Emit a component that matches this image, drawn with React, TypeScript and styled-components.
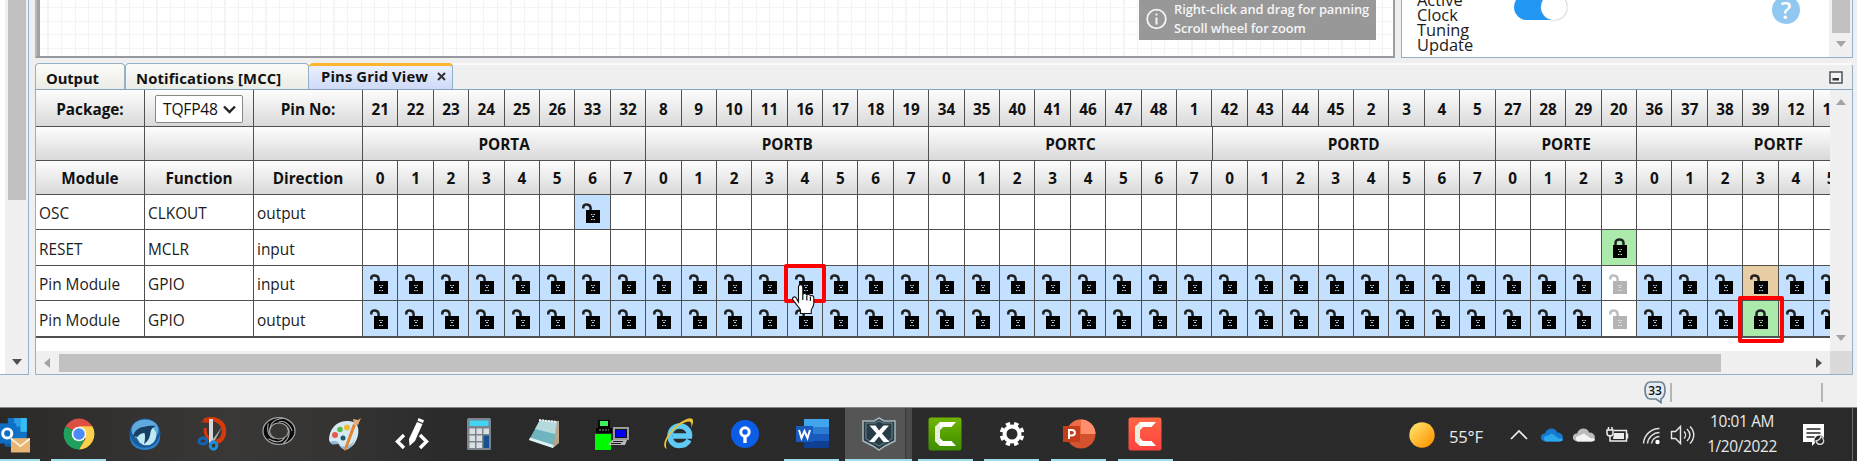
import React from "react";
import styled, { createGlobalStyle, css } from "styled-components";

const Global = createGlobalStyle`
  * { box-sizing: border-box; }
  html, body { margin: 0; padding: 0; overflow: hidden; background: #efefef; }
  body { font-family: "Open Sans", "Noto Sans", sans-serif; color: #1c1c1c; }
  svg { display: block; flex: none; }
`;

const LINE = "#505050";
const EDGE = "#94b0c8";

const Page = styled.div`
  width: 1857px;
  height: 461px;
  display: flex;
  flex-direction: column;
  overflow: hidden;
`;

const Workspace = styled.div`
  display: flex;
  height: 375px;
  flex: none;
`;

const SidePanel = styled.div`
  width: 29px;
  margin-right: 6px;
  border-right: 1px solid ${EDGE};
  border-bottom: 1px solid ${EDGE};
  background: #fff;
  display: flex;
  justify-content: flex-end;
`;

const VTrack = styled.div<{ $w: number }>`
  width: ${(p) => p.$w}px;
  flex: none;
  background: #f0f0f0;
  display: flex;
  flex-direction: column;
  align-items: center;
  justify-content: space-between;
`;

const VThumb = styled.div<{ $h: number }>`
  width: 18px;
  height: ${(p) => p.$h}px;
  background: #c1c1c1;
`;

const Arrow = styled.div<{ $dir: "up" | "down" | "left" | "right"; $dark?: boolean; $gap: string }>`
  width: 0;
  height: 0;
  margin: ${(p) => p.$gap};
  border: 5px solid transparent;
  ${(p) => {
    const c = p.$dark ? "#505050" : "#a3a3a3";
    switch (p.$dir) {
      case "up":
        return css`border-bottom: 6px solid ${c}; border-top: 0;`;
      case "down":
        return css`border-top: 6px solid ${c}; border-bottom: 0;`;
      case "left":
        return css`border-right: 6px solid ${c}; border-left: 0;`;
      default:
        return css`border-left: 6px solid ${c}; border-right: 0;`;
    }
  }}
`;

const MainColumn = styled.div`
  width: 1818px;
  display: flex;
  flex-direction: column;
`;

const TopRow = styled.div`
  display: flex;
  height: 58px;
  gap: 6px;
`;

const Canvas = styled.div`
  width: 1360px;
  border-left: 2px solid #b4bac0;
  border-right: 2px solid #9a9da1;
  border-bottom: 2px solid #96999e;
  box-shadow: inset 3px 0 0 #a2a2a2;
  background:
    repeating-linear-gradient(90deg, transparent 0 10.4px, #f4f4f4 10.4px 11.6px, transparent 11.6px 13.62px),
    repeating-linear-gradient(180deg, transparent 0 7px, #f4f4f4 7px 8.2px, transparent 8.2px 13.62px),
    #fff;
  display: flex;
  justify-content: flex-end;
  align-items: flex-start;
  padding-right: 17px;
`;

const Hint = styled.div`
  width: 237px;
  height: 40px;
  background: #989898;
  color: #f5f5f5;
  display: flex;
  align-items: center;
  padding: 0 0 2px 7px;
  gap: 7px;
  font-size: 12.9px;
  font-weight: 600;
  line-height: 19px;
  letter-spacing: -0.09px;
  white-space: nowrap;
`;

const OptionPanel = styled.div`
  width: 452px;
  border: 1px solid ${EDGE};
  border-top: 0;
  background: #fff;
  display: flex;
  overflow: hidden;
`;

const OptionLabel = styled.div`
  width: 96px;
  padding-left: 15px;
  margin-top: -8px;
  font-size: 16.4px;
  line-height: 15px;
`;

const OptionBody = styled.div`
  flex: 1;
  display: flex;
  justify-content: space-between;
  padding: 0 29px 0 16px;
`;

const Toggle = styled.div`
  width: 53px;
  height: 26px;
  margin-top: -6px;
  border-radius: 13px;
  background: #2196f3;
  display: flex;
  justify-content: flex-end;
`;

const Knob = styled.div`
  width: 26px;
  height: 26px;
  border-radius: 50%;
  background: #fff;
  box-shadow: 0 0 2px #aaa;
`;

const Help = styled.div`
  width: 28px;
  height: 28px;
  margin-top: -4px;
  border-radius: 50%;
  background: #90c8f2;
  color: #fff;
  font-size: 23px;
  font-weight: 600;
  line-height: 28px;
  text-align: center;
`;

const Dock = styled.div`
  height: 312px;
  margin-top: 5px;
  border: 1px solid ${EDGE};
  border-radius: 4px 4px 0 0;
  display: flex;
  flex-direction: column;
`;

const TabStrip = styled.div`
  height: 27px;
  margin-top: -1px;
  margin-left: -1px;
  flex: none;
  border-bottom: 1px solid #86a3bf;
  display: flex;
  box-shadow: inset 0 3px 0 -1px #fafafa;
`;

const Tab = styled.div<{ $w: number; $active?: boolean; $spacing: number }>`
  width: ${(p) => p.$w}px;
  padding: ${(p) => (p.$active ? "0 6px 3px 12px" : "2px 7px 0 10px")};
  display: flex;
  align-items: center;
  justify-content: space-between;
  border: 1px solid ${EDGE};
  border-bottom: 0;
  border-left-width: ${(p) => (p.$active ? 0 : 1)}px;
  border-top: ${(p) => (p.$active ? "3px solid #fdb52d" : `1px solid ${EDGE}`)};
  border-radius: 4px 4px 0 0;
  background: ${(p) =>
    p.$active ? "linear-gradient(#e9effd, #cfdaf7)" : "linear-gradient(#fbfbf8, #ecece6)"};
  color: #111;
  font-size: 14.8px;
  font-weight: 700;
  line-height: 18px;
  letter-spacing: ${(p) => p.$spacing}px;
  white-space: nowrap;
`;

const StripEnd = styled.div`
  flex: 1;
  display: flex;
  justify-content: flex-end;
  padding: 8px 9px 0 0;
`;

const DockBody = styled.div`
  height: 284px;
  display: flex;
`;

const Viewport = styled.div`
  width: 1794px;
  display: flex;
  flex-direction: column;
  justify-content: space-between;
  background: #fff;
`;

const Grid = styled.div`
  overflow: hidden;
  padding-bottom: 8px;
`;

const Row = styled.div<{ $h: number; $last?: boolean }>`
  display: flex;
  width: 2100px;
  height: ${(p) => p.$h}px;
  border-bottom: ${(p) => (p.$last ? 2 : 1)}px solid ${LINE};
`;

const HeadCell = styled.div<{ $w: number }>`
  width: ${(p) => p.$w}px;
  flex: none;
  border-right: 1px solid ${LINE};
  background: linear-gradient(#fdfdfd, #d9d9d9);
  display: flex;
  align-items: center;
  justify-content: center;
  font-size: 15.3px;
  font-weight: 700;
  color: #111;
  padding-top: 1px;
`;

const LabelCell = styled.div`
  width: 109px;
  flex: none;
  border-right: 1px solid ${LINE};
  padding: 3px 0 0 3px;
  display: flex;
  align-items: center;
  font-size: 15.4px;
`;

const fills = { none: "#fff", free: "#c3e0fe", used: "#abeaab", shared: "#e6cda3" };

const PinCell = styled.div<{ $fill: keyof typeof fills }>`
  width: 35.4px;
  flex: none;
  position: relative;
  border-right: 1px solid ${LINE};
  background: ${(p) => fills[p.$fill]};
  padding: 8px 0 0 7px;
`;

const Mark = styled.div<{ $w: number; $h: number; $x: number; $y: number }>`
  position: absolute;
  z-index: 2;
  left: ${(p) => p.$x}px;
  top: ${(p) => p.$y}px;
  width: ${(p) => p.$w}px;
  height: ${(p) => p.$h}px;
  border: 4px solid #f00;
  border-radius: 2px;
`;

const Pointer = styled.svg`
  position: absolute;
  z-index: 3;
  left: 3px;
  top: 17px;
`;

const Select = styled.div`
  width: 88px;
  height: 28px;
  border: 1px solid #888;
  border-radius: 2px;
  background: #fff;
  display: flex;
  align-items: center;
  justify-content: space-between;
  padding: 1px 6px 0 7px;
  font-size: 15.6px;
  font-weight: 400;
  letter-spacing: -0.2px;
`;

const HTrack = styled.div`
  height: 23px;
  flex: none;
  background: #f0f0f0;
  display: flex;
  align-items: center;
  justify-content: space-between;
`;

const HThumb = styled.div`
  width: 1662px;
  height: 18px;
  margin-right: auto;
  background: #c1c1c1;
`;

const Corner = styled.div`
  width: 22px;
  height: 23px;
  background: #dadada;
`;

const ScrollColumn = styled.div`
  display: flex;
  flex-direction: column;
  & > :first-child { flex: 1; }
`;

const StatusBar = styled.div`
  height: 32px;
  flex: none;
  display: flex;
  align-items: flex-start;
  padding: 6px 0 0 1643px;
`;

const Divider = styled.div<{ $gap: number }>`
  width: 2px;
  height: 19px;
  margin: 2px 0 0 ${(p) => p.$gap}px;
  background: #b5b5b5;
`;

const Taskbar = styled.div`
  height: 54px;
  flex: none;
  border-top: 1px solid #858585;
  background: linear-gradient(90deg, #2b2a29 0, #393836 230px, #353433 340px, #2a2a2a 450px, #2b2b2b 1200px, #2a2a2b 100%);
  color: #e9e9e9;
  display: flex;
`;

const Apps = styled.div`
  display: flex;
  flex: none;
  margin-left: -21.3px;
  width: 1430.3px;
`;

const AppSlot = styled.div<{ $open?: boolean; $active?: boolean }>`
  width: 66.67px;
  flex: none;
  display: flex;
  flex-direction: column;
  align-items: center;
  justify-content: space-between;
  padding-top: 9px;
  background: ${(p) =>
    p.$active ? "linear-gradient(90deg, #555 0 60px, #393939 60px 61px, #4b4b4b 61px)" : "none"};
  &::after {
    content: "";
    width: ${(p) => (p.$active ? "100%" : "55px")};
    height: 2px;
    background: ${(p) => (p.$open ? "#9fdfec" : "transparent")};
  }
`;

const Tray = styled.div`
  flex: 1;
  display: flex;
  align-items: center;
  & > * { flex: none; }
`;

const Temp = styled.div`
  width: 37px;
  margin: 3px 24px 0 14px;
  font-size: 16.6px;
  letter-spacing: -0.2px;
  white-space: nowrap;
`;

const Clock = styled.div`
  width: 72px;
  margin: 0 24px 0 10px;
  padding-top: 1px;
  font-size: 15.4px;
  line-height: 24.6px;
  letter-spacing: -0.35px;
  text-align: center;
  white-space: nowrap;
`;

const PeekEdge = styled.div`
  width: 5px;
  height: 53px;
  margin-left: 27px;
  border-left: 1px solid #6b6b6b;
`;

const Lock = ({ open, faded }: { open?: boolean; faded?: boolean }) => {
  const c = faded ? "#b3b3b3" : "#000";
  const hole = faded ? "#e4e4e4" : open ? "#b9d2ec" : "#a5dfa5";
  return (
    <svg width="18" height="21" viewBox="0 0 18 21">
      <path
        d={open ? "M1.3 5.5V4.2C1.6 0.6 8.300 0.600 8.600 5V8" : "M6.500 8V5C6.500 .3 14.500.3 14.500 5V8"}
        fill="none"
        stroke={faded ? "#bdbdbd" : "#202020"}
        strokeWidth="2.500"
      />
      <rect x="4" y="7" width="14" height="13" fill={c} />
      <path d="M9 11h1.500v1H9zM11.500 11H13v1h-1.500zM10 13h2v1h-2zM9 16h1.500v1H9zM11.500 16H13v1h-1.500z" fill={hole} />
    </svg>
  );
};

const Hand = () => (
  <Pointer width="26" height="32" viewBox="0 0 26 32">
    <path
      d="M7.500 19V4c0-3 4.300-3 4.300 0v8c.4-2.200 4-2 4 .6.5-1.800 3.600-1.500 3.600.8.6-1.500 3.400-1 3.400 1.200v6c0 3-2 4.500-2.500 6.400v3.500H9.500V27C8 24 4 20 2 17c-1.500-2.500 1.500-4 3-2.200z"
      fill="#fff"
      stroke="#111"
      strokeWidth="1.1"
    />
    <path d="M11.800 12v5M15.800 13v4.500M19.400 14v4" stroke="#111" strokeWidth="1.200" />
  </Pointer>
);

const ports = [
  { name: "PORTA", pins: [21, 22, 23, 24, 25, 26, 33, 32] },
  { name: "PORTB", pins: [8, 9, 10, 11, 16, 17, 18, 19] },
  { name: "PORTC", pins: [34, 35, 40, 41, 46, 47, 48, 1] },
  { name: "PORTD", pins: [42, 43, 44, 45, 2, 3, 4, 5] },
  { name: "PORTE", pins: [27, 28, 29, 20] },
  { name: "PORTF", pins: [36, 37, 38, 39, 12, 13] },
];
const allPins = ports.flatMap((p) => p.pins);
const portSpan = (p: { name: string; pins: number[] }) => (p.name === "PORTF" ? 8 : p.pins.length) * 35.4;

const modules = [
  { labels: ["OSC", "CLKOUT", "output"], h: 35 },
  { labels: ["RESET", "MCLR", "input"], h: 36 },
  { labels: ["Pin Module", "GPIO", "input"], h: 35 },
  { labels: ["Pin Module", "GPIO", "output"], h: 37 },
];

function renderPin(row: number, pin: number) {
  if (row === 0)
    return pin === 33 ? <PinCell key={pin} $fill="free"><Lock open /></PinCell> : <PinCell key={pin} $fill="none" />;
  if (row === 1)
    return pin === 20 ? <PinCell key={pin} $fill="used"><Lock /></PinCell> : <PinCell key={pin} $fill="none" />;
  if (pin === 20) return <PinCell key={pin} $fill="none"><Lock open faded /></PinCell>;
  if (pin === 39)
    return row === 2 ? (
      <PinCell key={pin} $fill="shared"><Lock open /></PinCell>
    ) : (
      <PinCell key={pin} $fill="used"><Lock /><Mark $x={-5} $y={-5} $w={46} $h={47} /></PinCell>
    );
  return (
    <PinCell key={pin} $fill="free">
      <Lock open />
      {row === 2 && pin === 16 && (<><Mark $x={-4} $y={-2} $w={42} $h={39} /><Hand /></>)}
    </PinCell>
  );
}

const Icon = ({ children, size = 34 }: { children: React.ReactNode; size?: number }) => (
  <svg width={size} height={size} viewBox="0 0 34 34">{children}</svg>
);

const Camtasia = ({ top, bottom }: { top: string; bottom: string }) => (
  <Icon>
    <defs><linearGradient id={`c${top.slice(1)}`} x2="0" y2="1"><stop stopColor={top} /><stop offset="1" stopColor={bottom} /></linearGradient></defs>
    <rect x=".5" y=".5" width="33" height="33" rx="2.500" fill={`url(#c${top.slice(1)})`} />
    <path d="M12 5h16l-4.500 5H15l-3 3v8l3 3h8.500l4.500 5H12l-5-5V10z" fill="#fff" />
    <path d="M12 5v24l-5-5V10z" fill="#e4ead8" opacity=".85" />
  </Icon>
);

const apps: { open?: boolean; active?: boolean; icon: React.ReactNode }[] = [
  { open: true, icon: (
    <Icon size={36}>
      <rect x="13" y="1" width="18" height="22" fill="#1273c5" /><rect x="19" y="1" width="6" height="8" fill="#2a9fe6" /><rect x="25" y="1" width="6" height="13" fill="#35bdf5" />
      <path d="M10 22h21v6H10z" fill="#0f5eb0" /><rect x="4" y="6" width="17" height="19" fill="#0d70c4" /><circle cx="12.500" cy="15.500" r="4.300" fill="none" stroke="#fff" strokeWidth="2.800" />
      <rect x="16" y="20" width="18" height="13.500" fill="#e9b573" /><path d="M16 20.500l9 7 9-7" fill="none" stroke="#fff2dc" strokeWidth="1.600" />
    </Icon>) },
  { open: true, icon: (
    <Icon>
      <path d="M17 17L3.600 9.300A15.500 15.500 0 0 1 30.400 9.300z" fill="#dd4f43" /><path d="M17 17L3.600 9.300A15.500 15.500 0 0 0 17 32.500l5-9z" fill="#1fa15d" /><path d="M17 9.300h13.400A15.500 15.500 0 0 1 17 32.500l6.500-11z" fill="#fdd04b" />
      <circle cx="17" cy="17" r="7.300" fill="#f5f5f5" /><circle cx="17" cy="17" r="5.700" fill="#4c8bf5" />
    </Icon>) },
  { icon: (
    <Icon>
      <circle cx="17" cy="17" r="15.500" fill="#1c5c9d" /><ellipse cx="17" cy="13" rx="13.500" ry="10.500" fill="#5fa9df" /><circle cx="18.500" cy="18.500" r="9.800" fill="#bfe9f3" />
      <path d="M5 20C7 11 14 8 28 9c-3 1-5 3-5.500 6-.5 5-2 9-6.500 12 1-4 1.500-8 .5-11-3 0-5 1-7 4-1-1-3-1-4.500 0z" fill="#173f63" /><path d="M2 18c2 15 25 19 30 0 1 9-6 15-15 15S1 27 2 18z" fill="#2b81ca" />
    </Icon>) },
  { icon: (
    <Icon>
      <path d="M9 4C19-1 29 5 29 14c0 7-3 10-8 11" fill="none" stroke="#d63a0b" strokeWidth="4.500" /><path d="M10 11c0 6 2 10 6 12" fill="none" stroke="#d63a0b" strokeWidth="3" /><path d="M5 5l9-4v5z" fill="#c43208" />
      <path d="M14 2h4v24h-4z" fill="#d5d8da" /><path d="M27 10L15 26l3 1z" fill="#aeb2b5" />
      <ellipse cx="8" cy="24" rx="4" ry="3" fill="none" stroke="#1263b4" strokeWidth="3" /><ellipse cx="18.500" cy="28.500" rx="3.300" ry="3.700" fill="none" stroke="#1b90df" strokeWidth="3" />
    </Icon>) },
  { icon: (
    <Icon>
      <ellipse cx="17" cy="14" rx="13.500" ry="11" fill="none" stroke="#070707" strokeWidth="5" />
      <ellipse cx="17" cy="14" rx="16" ry="13.400" fill="none" stroke="#a5a5a5" strokeWidth="1.200" /><ellipse cx="17" cy="14" rx="9.500" ry="8" fill="none" stroke="#a5a5a5" strokeWidth="1.200" />
      <g fill="none" stroke="#a9a9a9" strokeWidth="1.100">
        {[0, 72, 144, 216, 288].map((a) => <path key={a} transform={`rotate(${a} 17 14)`} d="M8.500 12C8 6 13 2 21 1.500" />)}
      </g>
    </Icon>) },
  { icon: (
    <Icon>
      <path d="M20 4C8 3 1 13 1 23c1 5 7 1 9 3 2 3 3 6 8 6 10-1 15-17 11-24-2-3-5-4-9-4z" fill="#d6e9f3" /><path d="M2 25c5-2 8-1 10 3 4 4 13 0 15-7-2 7-5 11-9 12-5 0-5-5-8-6-3 0-6 2-8-2z" fill="#8fb9d4" />
      <circle cx="7" cy="18" r="3" fill="#e35b4c" /><circle cx="12" cy="12.500" r="2.800" fill="#5bb947" /><circle cx="19" cy="10.500" r="3" fill="#f0bb3c" /><circle cx="15" cy="21" r="2.500" fill="#21576f" />
      <path d="M28 8l-9 24-3 2 1-5 8-22z" fill="#e28632" /><path d="M26 7l-1-5 5 1 3-2-3 7z" fill="#dfae79" />
    </Icon>) },
  { icon: (
    <Icon>
      <path d="M9 18L2.500 24.500 9 31M25 18l6.500 6.500L25 31" fill="none" stroke="#fff" strokeWidth="3.400" /><path d="M22 5l5.500 2-7.500 17-5.500 5-.5-7z" fill="#fff" /><path d="M23.500 1l5.500 2.300-1 2.700-5.500-2.300z" fill="#fff" />
    </Icon>) },
  { icon: (
    <Icon>
      <rect x="5" y="1" width="24" height="32" rx="1.500" fill="#7c858d" /><rect x="7.500" y="3.500" width="19" height="5.500" fill="#42d3f5" />
      <g fill="#d9e0e4"><path d="M7.500 11.500h5.500v5.500H7.500zM14.500 11.500H20v5.500h-5.500zM21.500 11.500H27v5.500h-5.500zM7.500 18.500h5.500V24H7.500zM14.500 18.500H20V24h-5.500zM7.500 25.500h5.500V31H7.500zM14.500 25.500H20V31h-5.500z" /></g><path d="M21.500 18.500H27V31h-5.500z" fill="#17508f" />
    </Icon>) },
  { icon: (
    <Icon>
      <path d="M12 3l19 1v22l-6 5z" fill="#b9a58c" /><path d="M12 3l17 2-4 26L1 23z" fill="#6fb5bf" /><path d="M12 3l17 2-2 12L7 12z" fill="#b5d9dc" /><path d="M1 23l24 8 .5-3L2 20.500z" fill="#dff1f2" /><path d="M11 3l18 2" stroke="#eee" strokeWidth="2" strokeDasharray="2 1" />
    </Icon>) },
  { icon: (
    <Icon>
      <path d="M3 3h12v10H3zM1 11h16v5H1z" fill="#050505" /><path d="M5 4h8v5H5z" fill="#3df05e" /><path d="M4 13h10" stroke="#999" strokeWidth="1" strokeDasharray="2 1" /><rect y="17" width="16" height="16" fill="#00f800" />
      <path d="M18 10h16v13H18z" fill="#9c9c9c" /><path d="M20 12h12v9H20z" fill="#111" /><path d="M21 13h10v7H21z" fill="#0000f0" /><path d="M17 23h15l-2 5H13z" fill="#b7b7b7" /><path d="M18 24.500h10M16 26.500h10" stroke="#222" strokeWidth="1" />
    </Icon>) },
  { icon: (
    <Icon>
      <path d="M27 23c-2 4-6 5.500-10 5.500-5 0-9-4-9-9.500S12 9 17.500 9 28 13 27.500 19H11" fill="none" stroke="#5fcbf5" strokeWidth="5.500" />
      <path d="M5 32C-2 30 5 16 14 9 22 2 32-2 31 5c0 2-1 4-2 6 2-8-3-8-11-3C9 14 1 26 5 32z" fill="#edc033" />
    </Icon>) },
  { icon: (
    <Icon>
      <circle cx="17" cy="17" r="14" fill="#0b5de8" /><circle cx="17" cy="15" r="4.200" fill="none" stroke="#fff" strokeWidth="3" /><path d="M15.300 18h3.400v8h-3.400z" fill="#fff" />
    </Icon>) },
  { open: true, icon: (
    <Icon>
      <path d="M9 2h25v8H9z" fill="#41a5ee" /><path d="M9 10h25v7H9z" fill="#2b7cd3" /><path d="M9 17h25v7H9z" fill="#185abd" /><path d="M9 24h25v7H9z" fill="#103f91" /><rect x="1" y="9" width="17" height="16" fill="#185abd" /><path d="M4 13l2.500 8 3-7 3 7 2.500-8" fill="none" stroke="#fff" strokeWidth="2" />
    </Icon>) },
  { open: true, active: true, icon: (
    <Icon>
      <path d="M17 1l5 3h11v20l-10 5-6 4-6-4-10-5V4h11z" fill="#263c47" stroke="#a9b8bf" strokeWidth="1.500" /><path d="M17 4l4 2h9v16l-8 4-5 3-5-3-8-4V6h9z" fill="none" stroke="#6f858e" /><path d="M7.500 8.500h6l3.500 5 4.500-5H27l-7 8 7.500 8.500h-6L17 19.500 12.500 25H7l7.500-8.500z" fill="#fff" />
    </Icon>) },
  { open: true, icon: <Camtasia top="#70b500" bottom="#3c8d00" /> },
  { open: true, icon: (
    <Icon>
      <circle cx="17" cy="17" r="7.500" fill="none" stroke="#fff" strokeWidth="4" />
      <circle cx="17" cy="17" r="10.500" fill="none" stroke="#fff" strokeWidth="3.600" strokeDasharray="4.300 3.947" strokeDashoffset="-1.800" />
    </Icon>) },
  { open: true, icon: (
    <Icon>
      <circle cx="19" cy="17" r="14.500" fill="#d35230" /><path d="M19 2.500V17h14.500A14.500 14.500 0 0 0 19 2.500z" fill="#ff8f6b" /><path d="M19 2.500V17H4.500A14.500 14.500 0 0 1 19 2.500z" fill="#ed6c47" /><rect x="1" y="9" width="17" height="16" fill="#c43e1c" /><path d="M7 22v-9h2.700c4.300 0 4.300 5.500 0 5.500H7" fill="none" stroke="#fff" strokeWidth="2" />
    </Icon>) },
  { open: true, icon: <Camtasia top="#ff6744" bottom="#ff4140" /> },
];

const TrayIcons = () => (
  <svg width="186" height="36" viewBox="1510 417 186 36">
    <path d="M1511 439l8-8 8 8" fill="none" stroke="#eee" strokeWidth="1.700" />
    <path d="M1545 441.500c-6-1-5-8 0-8 2-7 11-6 12-1 7 0 8 8 2 9z" fill="#1479cf" /><path d="M1546 441.500c-4-2-2-6 2-6l4-2 7 5c5-1 5 3 1 3z" fill="#2aa7ed" />
    <path d="M1577 441.500c-6-1-5-8 0-8 2-7 11-6 12-1 7 0 8 8 2 9z" fill="#bcbcbc" /><path d="M1578 441.500c-4-2-2-6 2-6l4-2 7 5c5-1 5 3 1 3z" fill="#f3f3f3" />
    <g fill="none" stroke="#eee" strokeWidth="1.500"><path d="M1614 430.500h12.500v10.500H1610v-6M1627.500 433.500v5M1607 430v3c0 4 6 4 6 0v-3zM1608.500 430v-3M1612 430v-3" /></g><path d="M1614 433h10v6h-11z" fill="#eee" />
    <g fill="none" stroke="#ddd" strokeWidth="1.500"><path d="M1643.500 443.500c.500-9 8-15 16-15M1647.500 443.500c.500-6 6-11 12-11M1651.500 443.500c.500-4 4-7 8-7" /></g><circle cx="1657.500" cy="442" r="2.200" fill="#fff" />
    <g fill="none" stroke="#e8e8e8" strokeWidth="1.400"><path d="M1671.500 431.500h4l5-5v17l-5-5h-4zM1684 431.500c2 2 2 5 0 7M1687 429c4 4 4 8 0 12M1690 426.500c5 5 5 12 0 17" /></g>
  </svg>
);

export default function App() {
  return (
    <Page>
      <Global />
      <Workspace>
        <SidePanel>
          <VTrack $w={23}>
            <VThumb $h={200} />
            <Arrow $dir="down" $dark $gap="0 0 9px" />
          </VTrack>
        </SidePanel>
        <MainColumn>
          <TopRow>
            <Canvas>
              <Hint>
                <svg width="21" height="22" viewBox="0 0 21 22"><circle cx="10.500" cy="11" r="9.300" fill="none" stroke="#f5f5f5" strokeWidth="1.800" /><path d="M10.500 9.500v7M10.500 5.500v2" stroke="#f5f5f5" strokeWidth="2" /></svg>
                <div>Right-click and drag for panning<br />Scroll wheel for zoom</div>
              </Hint>
            </Canvas>
            <OptionPanel>
              <OptionLabel>Active<br />Clock<br />Tuning<br />Update</OptionLabel>
              <OptionBody>
                <Toggle><Knob /></Toggle>
                <Help>?</Help>
              </OptionBody>
              <VTrack $w={23}>
                <VThumb $h={33} />
                <Arrow $dir="down" $gap="0 0 10px" />
              </VTrack>
            </OptionPanel>
          </TopRow>
          <Dock>
            <TabStrip>
              <Tab $w={90} $spacing={-0.1}>Output</Tab>
              <Tab $w={184} $spacing={0.15}>Notifications [MCC]</Tab>
              <Tab $w={144} $spacing={0.12} $active>
                <span>Pins Grid View</span>
                <svg width="9" height="9" viewBox="0 0 9 9"><path d="M1 1l7 7M8 1L1 8" stroke="#333" strokeWidth="2" /></svg>
              </Tab>
              <StripEnd>
                <svg width="14" height="13" viewBox="0 0 14 13"><rect x="1" y="1" width="12" height="11" fill="#f4f4f4" stroke="#4d5159" strokeWidth="1.500" /><rect x="3.500" y="7" width="6.500" height="2.500" fill="#33363d" /></svg>
              </StripEnd>
            </TabStrip>
            <DockBody>
              <Viewport>
                <Grid>
                  <Row $h={37}>
                    <HeadCell $w={109}>Package:</HeadCell>
                    <HeadCell $w={109}>
                      <Select>
                        TQFP48
                        <svg width="13" height="9" viewBox="0 0 13 9"><path d="M1 1.500l5.500 5.500L12 1.500" fill="none" stroke="#222" strokeWidth="2.400" /></svg>
                      </Select>
                    </HeadCell>
                    <HeadCell $w={109}>Pin No:</HeadCell>
                    {allPins.map((n) => <HeadCell key={n} $w={35.4}>{n}</HeadCell>)}
                  </Row>
                  <Row $h={34}>
                    <HeadCell $w={109} /><HeadCell $w={109} /><HeadCell $w={109} />
                    {ports.map((p) => <HeadCell key={p.name} $w={portSpan(p)}>{p.name}</HeadCell>)}
                  </Row>
                  <Row $h={34}>
                    <HeadCell $w={109}>Module</HeadCell>
                    <HeadCell $w={109}>Function</HeadCell>
                    <HeadCell $w={109}>Direction</HeadCell>
                    {ports.flatMap((p) => p.pins.map((n, i) => <HeadCell key={n} $w={35.4}>{i}</HeadCell>))}
                  </Row>
                  {modules.map((m, r) => (
                    <Row key={r} $h={m.h} $last={r === 3}>
                      {m.labels.map((t) => <LabelCell key={t}>{t}</LabelCell>)}
                      {allPins.map((n) => renderPin(r, n))}
                    </Row>
                  ))}
                </Grid>
                <HTrack>
                  <Arrow $dir="left" $gap="0 9px 0 8px" />
                  <HThumb />
                  <Arrow $dir="right" $dark $gap="0 8px 0 0" />
                </HTrack>
              </Viewport>
              <ScrollColumn>
                <VTrack $w={22}>
                  <Arrow $dir="up" $gap="9px 0 0" />
                  <Arrow $dir="down" $gap="0 0 10px" />
                </VTrack>
                <Corner />
              </ScrollColumn>
            </DockBody>
          </Dock>
        </MainColumn>
      </Workspace>
      <StatusBar>
        <svg width="24" height="23" viewBox="0 0 24 23">
          <path d="M7 1h10c3 0 5 3 5 8s-2 8-4 9v3.500L13 18H7c-3 0-5-4-5-9s2-8 5-8z" fill="#e4ecf3" stroke="#6f8293" strokeWidth="1.700" />
          <text x="12" y="13.600" textAnchor="middle" fontFamily="Open Sans" fontSize="12" fontWeight="600" fill="#111">33</text>
        </svg>
        <Divider $gap={3} />
        <Divider $gap={149} />
      </StatusBar>
      <Taskbar>
        <Apps>
          {apps.map((a, i) => <AppSlot key={i} $open={a.open} $active={a.active}>{a.icon}</AppSlot>)}
        </Apps>
        <Tray>
          <svg width="26" height="26" viewBox="0 0 26 26">
            <defs><linearGradient id="sun" x2="1" y2="1"><stop offset=".1" stopColor="#ffe169" /><stop offset=".9" stopColor="#ff9500" /></linearGradient></defs>
            <circle cx="13" cy="13" r="12.700" fill="url(#sun)" />
          </svg>
          <Temp>55°F</Temp>
          <TrayIcons />
          <Clock>10:01 AM<br />1/20/2022</Clock>
          <svg width="23" height="24" viewBox="0 0 23 24">
            <path d="M1 1h21v18h-8l-4 4v-4H1z" fill="#fff" /><path d="M4.500 6h14M4.500 10h14M4.500 14h8" stroke="#292929" strokeWidth="1.600" /><circle cx="17.500" cy="17.500" r="5" fill="#292929" /><path d="M19 13.500c-1 3-2 4-5 4.500 2 6 9 3 7.500-1-.500-1.500-1.500-3-2.500-3.500z" fill="none" stroke="#ddd" strokeWidth="1.300" />
          </svg>
          <PeekEdge />
        </Tray>
      </Taskbar>
    </Page>
  );
}
